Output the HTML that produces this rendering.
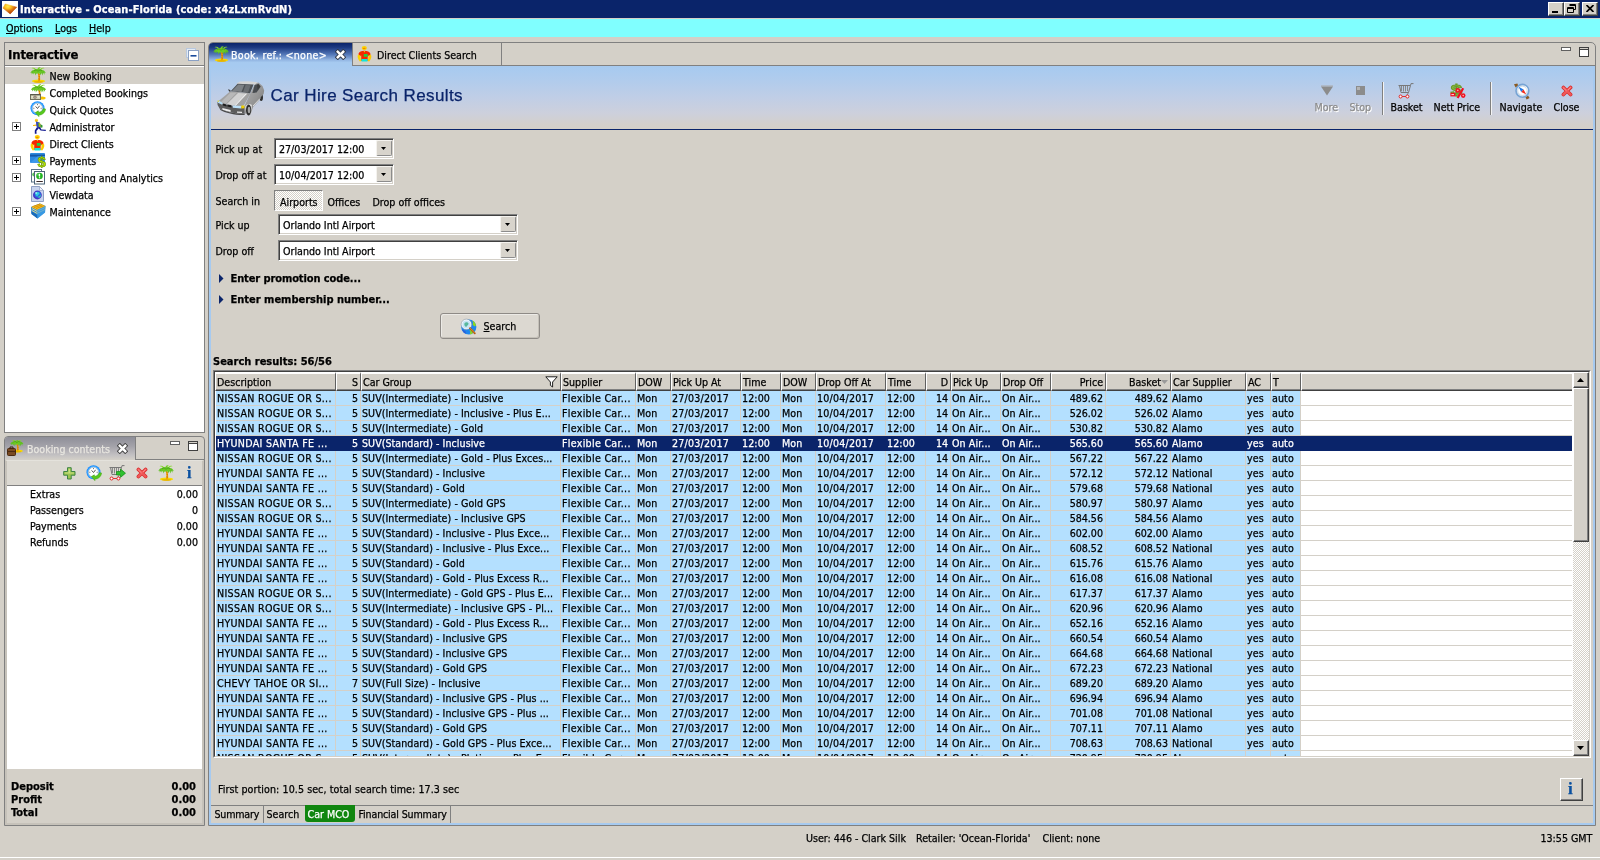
<!DOCTYPE html>
<html lang="en"><head><meta charset="utf-8"><title>Interactive - Ocean-Florida</title>
<style>
*{box-sizing:border-box;margin:0;padding:0}
html,body{width:1600px;height:860px;overflow:hidden;background:#d4d0c8}
body{position:relative;font:10.6px "DejaVu Sans Condensed","Liberation Sans",sans-serif;color:#000;-webkit-text-stroke:0.25px}
#app{position:absolute;left:0;top:0;width:1600px;height:860px;overflow:hidden;will-change:transform}
.a{position:absolute;white-space:pre;line-height:13px;height:13px}
.b{font:bold 11px "DejaVu Sans Condensed","Liberation Sans",sans-serif}
.abs{position:absolute}
.btn{position:absolute;background:#d4d0c8;border:1px solid;border-color:#fff #404040 #404040 #fff;box-shadow:inset -1px -1px 0 #808080}
.sunk{position:absolute;background:#fff;border:1px solid;border-color:#808080 #fff #fff #808080;box-shadow:inset 1px 1px 0 #404040, inset -1px -1px 0 #d4d0c8}
.r{text-align:right}
.hc{position:absolute;top:0;height:19px;background:#d4d0c8;border:1px solid;border-width:2px 1px 1px 1px;border-color:#fff #606060 #404040 #fff;box-shadow:inset 0 -1px 0 #808080}
.hc span{position:absolute;top:2px;line-height:13px;white-space:pre}
.row{position:absolute;left:1px;height:15px;width:1356px;border-bottom:1px solid #d4d0c8;background:#fff}
.row i{position:absolute;top:0;height:14px;font-style:normal;line-height:14px;white-space:pre;overflow:hidden;background:#b4e0ff;border-right:1px solid #d4d0c8;padding-left:1px;letter-spacing:0.1px}
.row i.k0{letter-spacing:.3px}.row i.k2{letter-spacing:.05px}.row i.k3{letter-spacing:.3px}.row i.k5{letter-spacing:.22px}
.row i.r{padding-left:0;padding-right:2px;text-align:right;letter-spacing:0}
.row.sel{background:#0a246a;border-bottom-color:#0a246a}
.row.sel i{background:#0a246a;color:#fff;border-right-color:#0a246a}
</style></head>
<body>
<div id="app">
<div class="abs" style="left:0px;top:0px;width:1600px;height:18px;background:#0a246a;"></div>
<svg class="abs" style="left:2px;top:1px" width="16" height="16" viewBox="0 0 16 16"><defs><radialGradient id="gem" cx="0.36" cy="0.25" r="0.75"><stop offset="0" stop-color="#ffe850"/><stop offset="0.3" stop-color="#fcc020"/><stop offset="0.6" stop-color="#d87010"/><stop offset="1" stop-color="#b03c00"/></radialGradient></defs><rect width="16" height="16" fill="#fff"/><path d="M1 7.1 L3.3 3 L14.7 6.2 L8.2 12.9Z" fill="url(#gem)" stroke="url(#gem)" stroke-width="0.6" stroke-linejoin="round"/></svg>
<div class="a b" style="left:20px;top:3px;color:#fff;letter-spacing:0.1px">Interactive - Ocean-Florida (code: x4zLxmRvdN)</div>
<div class="btn" style="left:1548px;top:2px;width:16px;height:14px"></div>
<div class="btn" style="left:1564px;top:2px;width:16px;height:14px"></div>
<div class="btn" style="left:1582px;top:2px;width:16px;height:14px"></div>
<div class="abs" style="left:1552px;top:11px;width:6px;height:2px;background:#000;"></div>
<svg class="abs" style="left:1567px;top:4px" width="10" height="10" viewBox="0 0 10 10"><path d="M2.5 0.5h6v5h-2M2.5 1.5h6M0.5 3.5h6v5h-6zM0.5 4.5h6" fill="none" stroke="#000" stroke-width="1"/></svg>
<svg class="abs" style="left:1586px;top:5px" width="8" height="7" viewBox="0 0 8 7"><path d="M0.5 0 L7.5 7 M7.5 0 L0.5 7" stroke="#000" stroke-width="1.7"/></svg>
<div class="abs" style="left:0px;top:18px;width:1600px;height:1px;background:#d4d0c8;"></div>
<div class="abs" style="left:0px;top:19px;width:1600px;height:18px;background:#80ffff;"></div>
<div class="a " style="left:6px;top:22px;"><u>O</u>ptions</div>
<div class="a " style="left:55px;top:22px;"><u>L</u>ogs</div>
<div class="a " style="left:89px;top:22px;"><u>H</u>elp</div>
<div class="abs" style="left:4px;top:42px;width:201px;height:391px;background:#d4d0c8;border:1px solid #808080"></div>
<div class="a " style="left:8px;top:49px;font:bold 13px 'DejaVu Sans Condensed','Liberation Sans',sans-serif;top:47px;line-height:16px;height:16px;letter-spacing:-0.15px">Interactive</div>
<svg class="abs" style="left:186px;top:48px" width="13" height="13" viewBox="0 0 13 13"><rect x="0.5" y="0.5" width="9" height="9" fill="#e4ecf6" stroke="#b8c8de"/><rect x="2.5" y="2.5" width="10" height="10" fill="#fff" stroke="#8aa0c4"/><rect x="4.5" y="7" width="6" height="1.6" fill="#1a4a9a"/></svg>
<div class="abs" style="left:5px;top:65px;width:199px;height:1px;background:#808080;"></div>
<div class="abs" style="left:5px;top:66px;width:199px;height:366px;background:#fff;"></div>
<div class="abs" style="left:5px;top:67px;width:199px;height:17px;background:#d4d0c8;"></div>
<svg class="abs" style="left:30px;top:67px" width="16" height="16" viewBox="0 0 16 16"><ellipse cx="8.5" cy="14.2" rx="6.6" ry="1.6" fill="#f8d800"/><ellipse cx="8.5" cy="14.9" rx="4.6" ry="0.8" fill="#e6b000"/><path d="M7.2 5 C8.6 8 8.6 11 8 14 L10 14 C10.4 11 10.2 8 9 5Z" fill="#f0a000"/><path d="M8.4 7 L9.6 7.6 M8.6 9.4 L9.9 10 M8.5 11.8 L9.9 12.2" stroke="#c05a00" stroke-width="0.8"/><path d="M8 5.5 C5.5 1.5 1.6 2.4 0.3 6.2 L1.6 5.6 L1.8 7.4 L3.2 5.6 L3.6 7.6 L5 5.6 L5.4 8.6 L6.6 6Z" fill="#5fc020"/><path d="M8 5.5 C10.5 1.5 14.4 2.4 15.9 6.2 L14.6 5.6 L14.4 7.8 L13 5.6 L12.6 8.4 L11.2 5.8 L10.8 8.6 L9.6 6Z" fill="#5fc020"/><path d="M8 5.5 C6.4 1.2 3.6 0 1.6 1.2 C4 1.4 5.4 2.8 6 4.6Z" fill="#86d82a"/><path d="M8 5.5 C9.6 1.2 12.4 0 14.6 1.2 C12 1.4 10.6 2.8 10 4.6Z" fill="#86d82a"/><path d="M8 5.6 C6 0.6 9.6 -0.2 10.6 0.6 C9 1.6 8.6 3.4 8 5.6Z" fill="#74cc24"/><ellipse cx="8" cy="4.3" rx="4.6" ry="2.3" fill="#6cc824"/><path d="M4 4 C5.4 2.6 7 2.6 8 4.4 C9 2.6 10.8 2.6 12 4" stroke="#3e9a14" stroke-width="0.7" fill="none"/></svg>
<div class="a " style="left:49.5px;top:69.5px;">New Booking</div>
<svg class="abs" style="left:30px;top:84px" width="16" height="16" viewBox="0 0 16 16"><g transform="translate(0.5,0)"><ellipse cx="11.5" cy="14" rx="3.6" ry="1.5" fill="#f5c400"/><path d="M7.2 5 C8.6 8 8.6 11 8 14 L10 14 C10.4 11 10.2 8 9 5Z" fill="#f0a000"/><path d="M8.4 7 L9.6 7.6 M8.6 9.4 L9.9 10 M8.5 11.8 L9.9 12.2" stroke="#c05a00" stroke-width="0.8"/><path d="M8 5.5 C5.5 1.5 1.6 2.4 0.3 6.2 L1.6 5.6 L1.8 7.4 L3.2 5.6 L3.6 7.6 L5 5.6 L5.4 8.6 L6.6 6Z" fill="#5fc020"/><path d="M8 5.5 C10.5 1.5 14.4 2.4 15.9 6.2 L14.6 5.6 L14.4 7.8 L13 5.6 L12.6 8.4 L11.2 5.8 L10.8 8.6 L9.6 6Z" fill="#5fc020"/><path d="M8 5.5 C6.4 1.2 3.6 0 1.6 1.2 C4 1.4 5.4 2.8 6 4.6Z" fill="#86d82a"/><path d="M8 5.5 C9.6 1.2 12.4 0 14.6 1.2 C12 1.4 10.6 2.8 10 4.6Z" fill="#86d82a"/><path d="M8 5.6 C6 0.6 9.6 -0.2 10.6 0.6 C9 1.6 8.6 3.4 8 5.6Z" fill="#74cc24"/><ellipse cx="8" cy="4.3" rx="4.6" ry="2.3" fill="#6cc824"/><path d="M4 4 C5.4 2.6 7 2.6 8 4.4 C9 2.6 10.8 2.6 12 4" stroke="#3e9a14" stroke-width="0.7" fill="none"/></g><rect x="0.5" y="10.5" width="10" height="5" fill="#d4d4b8" stroke="#70705a" stroke-width="1"/><rect x="0.5" y="10.3" width="10" height="1" fill="#505040"/><circle cx="5" cy="13.2" r="1.6" fill="#8a7a70"/><circle cx="5" cy="13.2" r="0.6" fill="#d4d4b8"/><rect x="7.6" y="12.4" width="2" height="0.9" fill="#f4f4e4"/><rect x="1.6" y="12.4" width="1.4" height="0.9" fill="#f4f4e4"/></svg>
<div class="a " style="left:49.5px;top:86.5px;">Completed Bookings</div>
<svg class="abs" style="left:30px;top:101px" width="16" height="16" viewBox="0 0 16 16"><circle cx="7.5" cy="7.3" r="7" fill="#1a8cff"/><circle cx="7.5" cy="7.3" r="6.2" fill="#4cb0ff"/><circle cx="7.5" cy="7.3" r="5" fill="#fff" stroke="#a8b8c8" stroke-width="0.7"/><path d="M7.5 3.2v0.9M7.5 10.5v0.9M3.4 7.3h0.9M10.7 7.3h0.9" stroke="#333" stroke-width="0.8"/><path d="M5.6 5.4 L7.5 7.5 L9.6 4.8" fill="none" stroke="#444" stroke-width="0.9"/><path d="M5.2 11.6 L8.4 9.8 L8.6 11.2 C10.8 11.2 12.6 10 13.4 7.6 L15.6 8 C15.2 12 11.8 14.2 8.8 14.2 L9 15.8Z" fill="#58c81c" stroke="#38a010" stroke-width="0.4"/></svg>
<div class="a " style="left:49.5px;top:103.5px;">Quick Quotes</div>
<svg class="abs" style="left:30px;top:118px" width="16" height="16" viewBox="0 0 16 16"><ellipse cx="6.4" cy="2.4" rx="1.5" ry="1.6" fill="#f8c000"/><path d="M5 1.2 L7.6 1.2 L8 2 L5.6 2.2Z" fill="#f8d860"/><path d="M6 3.6 L9.6 4.6 L11.4 9 L8 10 L6.2 8Z" fill="#3848b8"/><path d="M8 4.6 L10 5.2 L10.6 9 L8.8 9.4Z" fill="#58a828"/><path d="M10.2 6 L12.6 7.4 L12.4 9.4 L10.6 9.8Z" fill="#2e9a2e"/><path d="M9.4 5 L10.2 5.2 L10.4 9 L9.6 9Z" fill="#f4c020"/><path d="M6.2 6.6 L3 7 L3 8 L6.2 7.8Z" fill="#f8b800"/><path d="M7 9 L4.8 12.4 L4.8 15.8 L6.6 15.8 L6.4 13 L9 10Z" fill="#101890"/><path d="M8 9.4 L10.6 12.6 L15.8 13 L15.8 11.8 L11.4 11.4 L10 9Z" fill="#101890"/></svg>
<div class="a " style="left:49.5px;top:120.5px;">Administrator</div>
<svg class="abs" style="left:12px;top:122px" width="9" height="9" viewBox="0 0 9 9"><rect x="0.5" y="0.5" width="8" height="8" fill="#fff" stroke="#808080"/><path d="M2 4.5h5M4.5 2v5" stroke="#000" stroke-width="1"/></svg>
<svg class="abs" style="left:30px;top:135px" width="16" height="16" viewBox="0 0 16 16"><ellipse cx="7.3" cy="2.1" rx="2.6" ry="2.1" fill="#fcd000"/><ellipse cx="7.2" cy="2.4" rx="1.4" ry="0.7" fill="#f08800"/><path d="M1.4 8 C2 5.6 4.6 4.8 7.4 4.8 C10.2 4.8 12.8 5.6 13.6 8 L12.4 10.4 L10.8 9.6 L10.6 15 L4.2 15 L4.2 9.6 L2.6 10.4Z" fill="#f42800"/><path d="M6.6 4.9 L7.4 6.4 L8.2 4.9Z" fill="#fcd000"/><path d="M1.2 8.6 C0 10 0.6 13 2.8 15.4 L4.4 15 C3.6 13 3.4 11 3.6 9.8Z" fill="#fcd400"/><path d="M13.6 8.6 C15 10 14.4 13 12.2 15.4 L10.6 15 C11.4 13 11.6 11 11.4 9.8Z" fill="#fcc800"/><rect x="6.8" y="8" width="3.8" height="2.8" fill="#20d040"/><rect x="4.5" y="13" width="6" height="2.5" fill="#10e8d8"/></svg>
<div class="a " style="left:49.5px;top:137.5px;">Direct Clients</div>
<svg class="abs" style="left:30px;top:152px" width="17" height="16" viewBox="0 0 17 16"><rect x="0" y="1" width="15" height="10" rx="1" fill="#2c8ae0"/><rect x="0" y="2.6" width="15" height="2" fill="#1458a8"/><path d="M0 11 L8 4 L15 4 L15 11Z" fill="#4aa4f0" opacity="0.6"/><text x="11.6" y="14.8" text-anchor="middle" font-family="Liberation Sans" font-weight="bold" font-size="15" fill="#b4e000" stroke="#5a8800" stroke-width="0.5">$</text></svg>
<div class="a " style="left:49.5px;top:154.5px;">Payments</div>
<svg class="abs" style="left:12px;top:156px" width="9" height="9" viewBox="0 0 9 9"><rect x="0.5" y="0.5" width="8" height="8" fill="#fff" stroke="#808080"/><path d="M2 4.5h5M4.5 2v5" stroke="#000" stroke-width="1"/></svg>
<svg class="abs" style="left:30px;top:169px" width="16" height="16" viewBox="0 0 16 16"><rect x="1.5" y="0.5" width="10" height="12.5" fill="#fff" stroke="#5c7488"/><circle cx="4.2" cy="5.4" r="2" fill="#58c058"/><rect x="4.5" y="2.5" width="10" height="12.5" fill="#fff" stroke="#4c6478"/><circle cx="9.5" cy="7" r="3.3" fill="#22b422"/><circle cx="8.6" cy="5.8" r="1.3" fill="#7ee07e" opacity="0.7"/><path d="M9.5 4.8V7.6" stroke="#fff" stroke-width="1.3"/><rect x="8.85" y="8.2" width="1.3" height="1.1" fill="#fff"/><rect x="6.4" y="12" width="6.4" height="1" fill="#3a2a2a"/></svg>
<div class="a " style="left:49.5px;top:171.5px;">Reporting and Analytics</div>
<svg class="abs" style="left:12px;top:173px" width="9" height="9" viewBox="0 0 9 9"><rect x="0.5" y="0.5" width="8" height="8" fill="#fff" stroke="#808080"/><path d="M2 4.5h5M4.5 2v5" stroke="#000" stroke-width="1"/></svg>
<svg class="abs" style="left:30px;top:186px" width="16" height="17" viewBox="0 0 16 17"><path d="M1.5 0.5 H9.5 L13.5 4.5 V15.5 H1.5Z" fill="#c8d4ee" stroke="#90a0c4"/><path d="M9.5 0.5 V4.5 H13.5Z" fill="#f2f5fb" stroke="#90a0c4" stroke-width="0.7"/><circle cx="7.4" cy="9" r="4.4" fill="#4434c4"/><circle cx="7.8" cy="8.6" r="3.2" fill="#2c6ce0"/><path d="M5.4 6.6 C7 5.4 9.4 6 9.6 7.6 C9.2 9 7.6 8.8 7.4 10.4 C6 10.2 4.8 8.2 5.4 6.6Z" fill="#30d0e0"/><path d="M8.4 10.6 C9.6 10.4 10.6 9.6 10.8 8.6 C11.2 10.2 10.2 11.8 8.6 12.2Z" fill="#38d8b0"/><circle cx="6.2" cy="7" r="0.9" fill="#b8f0f8" opacity="0.8"/></svg>
<div class="a " style="left:49.5px;top:188.5px;">Viewdata</div>
<svg class="abs" style="left:30px;top:203px" width="16" height="16" viewBox="0 0 16 16"><path d="M1 4 L10 0.5 L15.5 3 L15 9.5 L7.5 15.5 L1.5 11Z" fill="#2a8ad8"/><path d="M1 4 L10 0.5 L15.5 3 L7 7Z" fill="#f8c020"/><path d="M2 5.6 L7 8.4 L15.4 4.4 M2 7.6 L7 10.4 L15.2 6.4" stroke="#f8e080" stroke-width="0.9" fill="none"/><path d="M1.2 8 L7.2 12 L7.5 15.5 L1.5 11Z" fill="#1a6ab8"/><path d="M7 7 L15.5 3 L15 9.5 L7.5 15.5Z" fill="#3ea0e8" opacity="0.7"/><path d="M2.4 3.6 L10 1 M4 4.6 L12 1.8 M6 5.6 L13.8 2.6" stroke="#c88000" stroke-width="0.7"/></svg>
<div class="a " style="left:49.5px;top:205.5px;">Maintenance</div>
<svg class="abs" style="left:12px;top:207px" width="9" height="9" viewBox="0 0 9 9"><rect x="0.5" y="0.5" width="8" height="8" fill="#fff" stroke="#808080"/><path d="M2 4.5h5M4.5 2v5" stroke="#000" stroke-width="1"/></svg>
<div class="abs" style="left:4px;top:436px;width:201px;height:390px;background:#d4d0c8;border:1px solid #808080;border-radius:4px 4px 0 0"></div>
<div class="abs" style="left:5px;top:437px;width:131px;height:23px;background:linear-gradient(#8e8e98,#a3a2a9 40%,#c2c0c2 78%,#d4d0c8);border-radius:3px 0 0 0"></div>
<div class="abs" style="left:135px;top:437px;width:1px;height:23px;background:#808080;"></div>
<div class="abs" style="left:136px;top:459px;width:68px;height:1px;background:#808080;"></div>
<svg class="abs" style="left:7px;top:440px" width="17" height="17" viewBox="0 0 17 17"><g transform="translate(3,-1) scale(0.85)"><ellipse cx="8.5" cy="14.2" rx="6.6" ry="1.6" fill="#f8d800"/><ellipse cx="8.5" cy="14.9" rx="4.6" ry="0.8" fill="#e6b000"/><path d="M7.2 5 C8.6 8 8.6 11 8 14 L10 14 C10.4 11 10.2 8 9 5Z" fill="#f0a000"/><path d="M8.4 7 L9.6 7.6 M8.6 9.4 L9.9 10 M8.5 11.8 L9.9 12.2" stroke="#c05a00" stroke-width="0.8"/><path d="M8 5.5 C5.5 1.5 1.6 2.4 0.3 6.2 L1.6 5.6 L1.8 7.4 L3.2 5.6 L3.6 7.6 L5 5.6 L5.4 8.6 L6.6 6Z" fill="#5fc020"/><path d="M8 5.5 C10.5 1.5 14.4 2.4 15.9 6.2 L14.6 5.6 L14.4 7.8 L13 5.6 L12.6 8.4 L11.2 5.8 L10.8 8.6 L9.6 6Z" fill="#5fc020"/><path d="M8 5.5 C6.4 1.2 3.6 0 1.6 1.2 C4 1.4 5.4 2.8 6 4.6Z" fill="#86d82a"/><path d="M8 5.5 C9.6 1.2 12.4 0 14.6 1.2 C12 1.4 10.6 2.8 10 4.6Z" fill="#86d82a"/><path d="M8 5.6 C6 0.6 9.6 -0.2 10.6 0.6 C9 1.6 8.6 3.4 8 5.6Z" fill="#74cc24"/><ellipse cx="8" cy="4.3" rx="4.6" ry="2.3" fill="#6cc824"/><path d="M4 4 C5.4 2.6 7 2.6 8 4.4 C9 2.6 10.8 2.6 12 4" stroke="#3e9a14" stroke-width="0.7" fill="none"/></g><rect x="0.5" y="8.5" width="8" height="7" rx="1" fill="#7a4a22" stroke="#4a2a10"/><path d="M3 8.5 V7 H6 V8.5" fill="none" stroke="#3a2010" stroke-width="1"/><rect x="0.5" y="11" width="8" height="1" fill="#4a2a10"/></svg>
<div class="a " style="left:27px;top:443px;color:#e8e6e0">Booking contents</div>
<svg class="abs" style="left:117px;top:443px" width="11" height="11" viewBox="0 0 11 11"><path d="M2.8 2.8 L8.2 8.2 M8.2 2.8 L2.8 8.2" stroke="#404040" stroke-width="4.3" stroke-linecap="square"/><path d="M2.8 2.8 L8.2 8.2 M8.2 2.8 L2.8 8.2" stroke="#fff" stroke-width="2.5" stroke-linecap="square"/></svg>
<svg class="abs" style="left:170px;top:441px" width="10" height="4" viewBox="0 0 10 4"><rect x="0.5" y="0.5" width="9" height="3" fill="#fff" stroke="#606060"/></svg>
<svg class="abs" style="left:188px;top:441px" width="10" height="10" viewBox="0 0 10 10"><rect x="0.5" y="0.5" width="9" height="9" fill="#fff" stroke="#404040"/><rect x="0.5" y="0.5" width="9" height="2" fill="#d4d0c8" stroke="#404040"/></svg>
<div class="abs" style="left:5px;top:460px;width:199px;height:365px;background:#d4d0c8;border:2px solid #c6c2ba;border-top:1px solid #e4e2dc"></div>
<div class="abs" style="left:7px;top:461px;width:195px;height:24px;background:#dcd9d2;"></div>
<div class="abs" style="left:7px;top:485px;width:195px;height:1px;background:#808080;"></div>
<div class="abs" style="left:7px;top:486px;width:195px;height:283px;background:#fff;"></div>
<svg class="abs" style="left:63px;top:467px" width="13" height="13" viewBox="0 0 13 13"><path d="M4.5 0.7 H8.2 V4.5 H12 V8.2 H8.2 V12 H4.5 V8.2 H0.7 V4.5 H4.5Z" fill="#9cc450" stroke="#3e8444" stroke-width="1" stroke-linejoin="round"/><path d="M5.6 1.8 H7.1 V5.6 H10.9 V6.4 H1.8 V5.6 H5.6Z" fill="#c8e080"/></svg>
<svg class="abs" style="left:86px;top:465px" width="16" height="16" viewBox="0 0 16 16"><circle cx="7.5" cy="7.3" r="7" fill="#1a8cff"/><circle cx="7.5" cy="7.3" r="6.2" fill="#4cb0ff"/><circle cx="7.5" cy="7.3" r="5" fill="#fff" stroke="#a8b8c8" stroke-width="0.7"/><path d="M7.5 3.2v0.9M7.5 10.5v0.9M3.4 7.3h0.9M10.7 7.3h0.9" stroke="#333" stroke-width="0.8"/><path d="M5.6 5.4 L7.5 7.5 L9.6 4.8" fill="none" stroke="#444" stroke-width="0.9"/><path d="M5.2 11.6 L8.4 9.8 L8.6 11.2 C10.8 11.2 12.6 10 13.4 7.6 L15.6 8 C15.2 12 11.8 14.2 8.8 14.2 L9 15.8Z" fill="#58c81c" stroke="#38a010" stroke-width="0.4"/></svg>
<svg class="abs" style="left:109px;top:465px" width="17" height="16" viewBox="0 0 17 16"><path d="M0.5 2.5 H12.5 M1.5 2.5 L3 9.5 H10.5 L12.5 2.5" fill="none" stroke="#787878" stroke-width="1"/><path d="M3.5 3v5M5.5 3v5.5M7.5 3v5.5M9.5 3v5" stroke="#888" stroke-width="1"/><path d="M12.5 2.5 L13 0.6 H15.5" fill="none" stroke="#787878" stroke-width="1"/><path d="M10.5 9.5 L9 12" fill="none" stroke="#787878" stroke-width="0.9"/><path d="M3 13.5 H9" stroke="#e02020" stroke-width="0.9"/><circle cx="2.6" cy="13.5" r="1.5" fill="#fff" stroke="#e02020" stroke-width="1"/><circle cx="9.4" cy="13.5" r="1.5" fill="#fff" stroke="#e02020" stroke-width="1"/><path d="M7.5 6.5 H11.5 V4 L16.5 8.2 L11.5 12.4 V10 H7.5Z" fill="#2fc02f" stroke="#148a14" stroke-width="0.7"/></svg>
<svg class="abs" style="left:136px;top:467px" width="12" height="12" viewBox="0 0 14 14"><path d="M2.8 2.8 L11.2 11.2 M11.2 2.8 L2.8 11.2" stroke="#d42828" stroke-width="4.2" stroke-linecap="round"/><path d="M2.8 2.8 L11.2 11.2 M11.2 2.8 L2.8 11.2" stroke="#f05858" stroke-width="2.8" stroke-linecap="round"/><path d="M2.6 3.2 L6.2 6.6 M11 3 L8.4 5.6" stroke="#ffa0a0" stroke-width="0.9" stroke-linecap="round"/></svg>
<svg class="abs" style="left:158px;top:465px" width="16" height="16" viewBox="0 0 16 16"><ellipse cx="8.5" cy="14.2" rx="6.6" ry="1.6" fill="#f8d800"/><ellipse cx="8.5" cy="14.9" rx="4.6" ry="0.8" fill="#e6b000"/><path d="M7.2 5 C8.6 8 8.6 11 8 14 L10 14 C10.4 11 10.2 8 9 5Z" fill="#f0a000"/><path d="M8.4 7 L9.6 7.6 M8.6 9.4 L9.9 10 M8.5 11.8 L9.9 12.2" stroke="#c05a00" stroke-width="0.8"/><path d="M8 5.5 C5.5 1.5 1.6 2.4 0.3 6.2 L1.6 5.6 L1.8 7.4 L3.2 5.6 L3.6 7.6 L5 5.6 L5.4 8.6 L6.6 6Z" fill="#5fc020"/><path d="M8 5.5 C10.5 1.5 14.4 2.4 15.9 6.2 L14.6 5.6 L14.4 7.8 L13 5.6 L12.6 8.4 L11.2 5.8 L10.8 8.6 L9.6 6Z" fill="#5fc020"/><path d="M8 5.5 C6.4 1.2 3.6 0 1.6 1.2 C4 1.4 5.4 2.8 6 4.6Z" fill="#86d82a"/><path d="M8 5.5 C9.6 1.2 12.4 0 14.6 1.2 C12 1.4 10.6 2.8 10 4.6Z" fill="#86d82a"/><path d="M8 5.6 C6 0.6 9.6 -0.2 10.6 0.6 C9 1.6 8.6 3.4 8 5.6Z" fill="#74cc24"/><ellipse cx="8" cy="4.3" rx="4.6" ry="2.3" fill="#6cc824"/><path d="M4 4 C5.4 2.6 7 2.6 8 4.4 C9 2.6 10.8 2.6 12 4" stroke="#3e9a14" stroke-width="0.7" fill="none"/></svg>
<div class="abs" style="left:187px;top:465px;font:bold 16px 'Liberation Serif',serif;color:#0a50a0;line-height:16px">i</div>
<div class="a " style="left:30px;top:488px;">Extras</div>
<div class="a r" style="left:140px;width:58px;top:488px">0.00</div>
<div class="a " style="left:30px;top:504px;">Passengers</div>
<div class="a r" style="left:140px;width:58px;top:504px">0</div>
<div class="a " style="left:30px;top:520px;">Payments</div>
<div class="a r" style="left:140px;width:58px;top:520px">0.00</div>
<div class="a " style="left:30px;top:536px;">Refunds</div>
<div class="a r" style="left:140px;width:58px;top:536px">0.00</div>
<div class="a b" style="left:11px;top:780px;">Deposit</div>
<div class="a b r" style="left:140px;width:56px;top:780px">0.00</div>
<div class="a b" style="left:11px;top:793px;">Profit</div>
<div class="a b r" style="left:140px;width:56px;top:793px">0.00</div>
<div class="a b" style="left:11px;top:806px;">Total</div>
<div class="a b r" style="left:140px;width:56px;top:806px">0.00</div>
<div class="abs" style="left:208px;top:42px;width:1388px;height:784px;background:#d4d0c8;border:1px solid #808080;border-radius:5px 5px 0 0"></div>
<div class="abs" style="left:352px;top:65px;width:1243px;height:1px;background:#808080;"></div>
<div class="abs" style="left:209px;top:66px;width:1386px;height:759px;background:#a6caf0;"></div>
<div class="abs" style="left:211px;top:66px;width:1382px;height:757px;background:#d4d0c8;"></div>
<div class="abs" style="left:211px;top:66px;width:1382px;height:63px;background:linear-gradient(#a6caf0,#b2ccec 25%,#c0cee6 50%,#cdd0dc 75%,#d3d0cc 92%,#d4d0c8);"></div>
<div class="abs" style="left:211px;top:129px;width:1382px;height:1px;background:#0a246a;"></div>
<div class="abs" style="left:209px;top:43px;width:143px;height:23px;background:linear-gradient(#0a246a,#1c3a82 20%,#5478b8 50%,#8fb2e0 72%,#a6caf0 85%);border-radius:4px 0 0 0"></div>
<svg class="abs" style="left:213px;top:46px" width="16" height="16" viewBox="0 0 16 16"><ellipse cx="8.5" cy="14.2" rx="6.6" ry="1.6" fill="#f8d800"/><ellipse cx="8.5" cy="14.9" rx="4.6" ry="0.8" fill="#e6b000"/><path d="M7.2 5 C8.6 8 8.6 11 8 14 L10 14 C10.4 11 10.2 8 9 5Z" fill="#f0a000"/><path d="M8.4 7 L9.6 7.6 M8.6 9.4 L9.9 10 M8.5 11.8 L9.9 12.2" stroke="#c05a00" stroke-width="0.8"/><path d="M8 5.5 C5.5 1.5 1.6 2.4 0.3 6.2 L1.6 5.6 L1.8 7.4 L3.2 5.6 L3.6 7.6 L5 5.6 L5.4 8.6 L6.6 6Z" fill="#5fc020"/><path d="M8 5.5 C10.5 1.5 14.4 2.4 15.9 6.2 L14.6 5.6 L14.4 7.8 L13 5.6 L12.6 8.4 L11.2 5.8 L10.8 8.6 L9.6 6Z" fill="#5fc020"/><path d="M8 5.5 C6.4 1.2 3.6 0 1.6 1.2 C4 1.4 5.4 2.8 6 4.6Z" fill="#86d82a"/><path d="M8 5.5 C9.6 1.2 12.4 0 14.6 1.2 C12 1.4 10.6 2.8 10 4.6Z" fill="#86d82a"/><path d="M8 5.6 C6 0.6 9.6 -0.2 10.6 0.6 C9 1.6 8.6 3.4 8 5.6Z" fill="#74cc24"/><ellipse cx="8" cy="4.3" rx="4.6" ry="2.3" fill="#6cc824"/><path d="M4 4 C5.4 2.6 7 2.6 8 4.4 C9 2.6 10.8 2.6 12 4" stroke="#3e9a14" stroke-width="0.7" fill="none"/></svg>
<div class="a " style="left:231px;top:49px;color:#fff;letter-spacing:0.28px">Book. ref.: &lt;none&gt;</div>
<svg class="abs" style="left:334.5px;top:48.5px" width="11" height="11" viewBox="0 0 11 11"><path d="M2.8 2.8 L8.2 8.2 M8.2 2.8 L2.8 8.2" stroke="#303848" stroke-width="4.3" stroke-linecap="square"/><path d="M2.8 2.8 L8.2 8.2 M8.2 2.8 L2.8 8.2" stroke="#fff" stroke-width="2.5" stroke-linecap="square"/></svg>
<div class="abs" style="left:352px;top:43px;width:1px;height:23px;background:#808080;"></div>
<svg class="abs" style="left:357px;top:46px" width="16" height="16" viewBox="0 0 16 16"><ellipse cx="7.3" cy="2.1" rx="2.6" ry="2.1" fill="#fcd000"/><ellipse cx="7.2" cy="2.4" rx="1.4" ry="0.7" fill="#f08800"/><path d="M1.4 8 C2 5.6 4.6 4.8 7.4 4.8 C10.2 4.8 12.8 5.6 13.6 8 L12.4 10.4 L10.8 9.6 L10.6 15 L4.2 15 L4.2 9.6 L2.6 10.4Z" fill="#f42800"/><path d="M6.6 4.9 L7.4 6.4 L8.2 4.9Z" fill="#fcd000"/><path d="M1.2 8.6 C0 10 0.6 13 2.8 15.4 L4.4 15 C3.6 13 3.4 11 3.6 9.8Z" fill="#fcd400"/><path d="M13.6 8.6 C15 10 14.4 13 12.2 15.4 L10.6 15 C11.4 13 11.6 11 11.4 9.8Z" fill="#fcc800"/><rect x="6.8" y="8" width="3.8" height="2.8" fill="#20d040"/><rect x="4.5" y="13" width="6" height="2.5" fill="#10e8d8"/></svg>
<div class="a " style="left:377px;top:49px;">Direct Clients Search</div>
<div class="abs" style="left:501px;top:43px;width:1px;height:22px;background:#808080;"></div>
<svg class="abs" style="left:1561px;top:47px" width="10" height="4" viewBox="0 0 10 4"><rect x="0.5" y="0.5" width="9" height="3" fill="#fff" stroke="#606060"/></svg>
<svg class="abs" style="left:1579px;top:47px" width="10" height="10" viewBox="0 0 10 10"><rect x="0.5" y="0.5" width="9" height="9" fill="#fff" stroke="#404040"/><rect x="0.5" y="0.5" width="9" height="2" fill="#d4d0c8" stroke="#404040"/></svg>
<svg class="abs" style="left:217px;top:80px" width="48" height="36" viewBox="0 0 48 36"><defs><linearGradient id="cg" x1="0" y1="0" x2="1" y2="1"><stop offset="0" stop-color="#b4b4b4"/><stop offset="0.55" stop-color="#949494"/><stop offset="1" stop-color="#6c6c6c"/></linearGradient></defs><ellipse cx="44.2" cy="17.5" rx="1.8" ry="3.4" fill="#303030"/><path d="M27 27 L33 14 L38 3.6 L41.5 2.4 L45.5 6 L47.2 10.5 L46.6 14 L44 17 L42.6 20 L36 27 L33.5 34.5 L28 33.5Z" fill="url(#cg)"/><path d="M19.5 3.4 L23 1.6 L31 1.2 L40.5 2.2 L38.2 4.4 L34 5 L21 4.6Z" fill="#d4d4d4"/><path d="M13.4 11.6 L20.6 3.8 L36.6 4.6 L33 13.4 C26 12.4 19 12 13.4 11.6Z" fill="#4e5256"/><path d="M15 11 L21.2 4.6 L27.4 4.8 L24.4 12Z" fill="#8e9296" opacity="0.75"/><path d="M28.6 5 L33.6 5.2 L31 12.8 L26 12.2Z" fill="#787c80" opacity="0.7"/><path d="M37.6 5 L41.6 3.8 L43.8 6.6 L39.6 12.6 L35.4 13Z" fill="#484c50"/><path d="M40 5 L41.4 4.6 L43 6.6 L40.6 10Z" fill="#3c3c3c"/><path d="M11 9.2 L13.4 10 L13.6 12 L12.2 11.6Z" fill="#3a3a3a"/><path d="M1 21.6 L6.5 17 L13 11.6 C20 12 27 12.4 33.4 13.6 L27.4 24.6 L25 26.6 C17 26.6 8 25 1 21.6Z" fill="#a2a2a2"/><path d="M13.6 12.4 L19.6 12.8 L9 23.8 L4 22Z" fill="#b8b8b8"/><path d="M21 13 L29 13.6 L17.6 25.6 L9.6 24.2Z" fill="#d2d2d2"/><path d="M29 13.6 L30 13.7 L18.6 25.8 L17.6 25.6Z" fill="#fafafa"/><path d="M0.4 21.8 C8 25.4 17 27 27.2 26.8 L27.8 33.6 C19 34.2 9 32 2.6 28.6 L0.6 25Z" fill="#5c5c5c"/><path d="M0.6 20.6 L1.6 20.4 L5.4 22.8 L5.2 24.8 L0.8 22.8Z" fill="#b4dcf4"/><path d="M0.6 20.4 L1.8 20.6 L1.8 22 L0.6 21.8Z" fill="#e8d020"/><path d="M15.6 25.4 L24.4 26 L24.2 28.4 L15.8 27.8Z" fill="#bce0f8"/><path d="M24.4 25.6 L27.4 25.6 L27.4 28.2 L24.2 28.4Z" fill="#f0d000"/><path d="M6 23.4 L9.4 24.4 L9.4 26.4 L6 25.4Z M10.4 24.6 L14.4 25.2 L14.4 27.4 L10.4 26.6Z" fill="#1e1e1e"/><path d="M5.4 28 L13.6 30 L13.6 32 L5.4 30Z" fill="#ececec"/><path d="M20 31.6 L25 31.8 L25 33 L20 32.8Z" fill="#ececec"/><path d="M2.6 28.6 C9 32 19 34.2 27.8 33.6 L27.6 35 C19 35.4 8 33 3.4 30Z" fill="#4a4a4a"/><path d="M28 27 C29 24 33 23 35 25 L34 34 L30 35Z" fill="#d8d8d8"/><ellipse cx="31.6" cy="30" rx="2.6" ry="5.4" fill="#2c2c2c"/><ellipse cx="32" cy="30" rx="1.3" ry="3.2" fill="#a4a4a4"/><path d="M36 26 L43 18.6" stroke="#f0f0f0" stroke-width="0.8"/></svg>
<div class="a" style="left:270.5px;top:86px;height:22px;line-height:22px;font:17px 'Liberation Sans',sans-serif;letter-spacing:0.4px;color:#0a246a">Car Hire Search Results</div>
<svg class="abs" style="left:1320px;top:85px" width="14" height="11" viewBox="0 0 14 11"><path d="M1 1.5 H13 L7 10.5Z" fill="#8c8c8c"/><path d="M1 1 H13" stroke="#a8a8a8"/></svg>
<div class="a " style="left:1314.5px;top:101px;color:#fff;margin:1px 0 0 1px">More</div>
<div class="a " style="left:1314.5px;top:101px;color:#8c8c8c">More</div>
<svg class="abs" style="left:1356px;top:86px" width="9" height="9" viewBox="0 0 9 9"><rect width="9" height="9" fill="#8c8c8c"/><rect x="1" y="1" width="3" height="3" fill="#b4b4b4"/></svg>
<div class="a " style="left:1349.5px;top:101px;color:#fff;margin:1px 0 0 1px">Stop</div>
<div class="a " style="left:1349.5px;top:101px;color:#8c8c8c">Stop</div>
<div class="abs" style="left:1382px;top:82px;width:1px;height:33px;background:#808080;"></div>
<div class="abs" style="left:1383px;top:82px;width:1px;height:33px;background:#f4f4f4;"></div>
<svg class="abs" style="left:1398px;top:83px" width="17" height="16" viewBox="0 0 17 16"><path d="M0.5 2.5 H12.5 M1.5 2.5 L3 9.5 H10.5 L12.5 2.5" fill="none" stroke="#787878" stroke-width="1"/><path d="M3.5 3v5M5.5 3v5.5M7.5 3v5.5M9.5 3v5" stroke="#888" stroke-width="1"/><path d="M12.5 2.5 L13 0.6 H15.5" fill="none" stroke="#787878" stroke-width="1"/><path d="M10.5 9.5 L9 12" fill="none" stroke="#787878" stroke-width="0.9"/><path d="M3 13.5 H9" stroke="#e02020" stroke-width="0.9"/><circle cx="2.6" cy="13.5" r="1.5" fill="#fff" stroke="#e02020" stroke-width="1"/><circle cx="9.4" cy="13.5" r="1.5" fill="#fff" stroke="#e02020" stroke-width="1"/></svg>
<div class="a " style="left:1390.5px;top:101px;">Basket</div>
<svg class="abs" style="left:1449px;top:83px" width="17" height="17" viewBox="0 0 17 17"><g transform="translate(7.4 0) scale(1.35 1)"><text x="0" y="12" text-anchor="middle" font-family="Liberation Sans" font-weight="bold" font-size="15" fill="#8cba40" stroke="#6a9a28" stroke-width="0.9">$</text></g><rect x="1.4" y="9.8" width="5" height="3.6" fill="#f01020"/><rect x="2.4" y="11.1" width="2.6" height="1" fill="#fff" opacity="0.85"/><circle cx="8.8" cy="7.4" r="2.3" fill="#f01020"/><circle cx="8.8" cy="7.4" r="0.8" fill="#ffb0a0"/><circle cx="14.2" cy="12.6" r="2.3" fill="#f01020"/><circle cx="14.2" cy="12.6" r="0.8" fill="#ffb0a0"/><path d="M14.2 5.2 L8.6 15" stroke="#f01020" stroke-width="2.2"/></svg>
<div class="a " style="left:1433.5px;top:101px;">Nett Price</div>
<div class="abs" style="left:1490px;top:82px;width:1px;height:33px;background:#808080;"></div>
<div class="abs" style="left:1491px;top:82px;width:1px;height:33px;background:#f4f4f4;"></div>
<svg class="abs" style="left:1513px;top:83px" width="17" height="17" viewBox="0 0 17 17"><path d="M1 1.2 L4.4 0.6 L5.2 2.8 L2.6 4.4Z" fill="#8a5a22"/><path d="M16.6 15 L13.6 16.4 L12.4 14 L15 12.6Z" fill="#8a5a22"/><circle cx="9.4" cy="7.8" r="6.4" fill="#dce8f4" stroke="#78a4d4" stroke-width="1.6"/><circle cx="9.4" cy="7.8" r="4.6" fill="#fff" stroke="#b8c8d8" stroke-width="0.6"/><path d="M5.6 3.8 L10.6 6.6 L8.2 9Z" fill="#1e78e8"/><path d="M13.2 11.4 L8.2 9 L10.6 6.6Z" fill="#f03020"/><path d="M12.6 3.6 C13.6 4.6 14.2 6 14.2 7.4" stroke="#fff" stroke-width="1" fill="none" opacity="0.8"/></svg>
<div class="a " style="left:1499.5px;top:101px;">Navigate</div>
<svg class="abs" style="left:1561px;top:85px" width="12" height="12" viewBox="0 0 14 14"><path d="M2.8 2.8 L11.2 11.2 M11.2 2.8 L2.8 11.2" stroke="#d42828" stroke-width="4.2" stroke-linecap="round"/><path d="M2.8 2.8 L11.2 11.2 M11.2 2.8 L2.8 11.2" stroke="#f05858" stroke-width="2.8" stroke-linecap="round"/><path d="M2.6 3.2 L6.2 6.6 M11 3 L8.4 5.6" stroke="#ffa0a0" stroke-width="0.9" stroke-linecap="round"/></svg>
<div class="a " style="left:1553.5px;top:101px;">Close</div>
<div class="a " style="left:215.5px;top:143px;">Pick up at</div>
<div class="sunk" style="left:274px;top:138px;width:120px;height:21px"></div>
<div class="a " style="left:279px;top:143px;">27/03/2017 12:00</div>
<div class="abs" style="left:376px;top:140px;width:16px;height:16px;background:#d8d4cc;border:1px solid;border-color:#f4f2ee #8c8c8c #8c8c8c #f4f2ee;border-radius:2px"></div>
<svg class="abs" style="left:381px;top:147px" width="5" height="3" viewBox="0 0 5 3"><path d="M0 0 H5 L2.5 3Z" fill="#000"/></svg>
<div class="a " style="left:215.5px;top:169px;">Drop off at</div>
<div class="sunk" style="left:274px;top:164px;width:120px;height:21px"></div>
<div class="a " style="left:279px;top:169px;">10/04/2017 12:00</div>
<div class="abs" style="left:376px;top:166px;width:16px;height:16px;background:#d8d4cc;border:1px solid;border-color:#f4f2ee #8c8c8c #8c8c8c #f4f2ee;border-radius:2px"></div>
<svg class="abs" style="left:381px;top:173px" width="5" height="3" viewBox="0 0 5 3"><path d="M0 0 H5 L2.5 3Z" fill="#000"/></svg>
<div class="a " style="left:215.5px;top:195px;">Search in</div>
<div class="abs" style="left:274px;top:190px;width:49px;height:21px;background:repeating-conic-gradient(#fff 0 25%, #d4d0c8 0 50%) 0 0/2px 2px;border:1px solid;border-color:#808080 #fff #fff #808080"></div>
<div class="a " style="left:280px;top:196px;">Airports</div>
<div class="a " style="left:327.5px;top:196px;">Offices</div>
<div class="a " style="left:372.5px;top:196px;">Drop off offices</div>
<div class="a " style="left:215.5px;top:219px;">Pick up</div>
<div class="sunk" style="left:278px;top:214px;width:240px;height:21px"></div>
<div class="a " style="left:283px;top:219px;">Orlando Intl Airport</div>
<div class="abs" style="left:500px;top:216px;width:16px;height:16px;background:#d8d4cc;border:1px solid;border-color:#f4f2ee #8c8c8c #8c8c8c #f4f2ee;border-radius:2px"></div>
<svg class="abs" style="left:505px;top:223px" width="5" height="3" viewBox="0 0 5 3"><path d="M0 0 H5 L2.5 3Z" fill="#000"/></svg>
<div class="a " style="left:215.5px;top:245px;">Drop off</div>
<div class="sunk" style="left:278px;top:240px;width:240px;height:21px"></div>
<div class="a " style="left:283px;top:245px;">Orlando Intl Airport</div>
<div class="abs" style="left:500px;top:242px;width:16px;height:16px;background:#d8d4cc;border:1px solid;border-color:#f4f2ee #8c8c8c #8c8c8c #f4f2ee;border-radius:2px"></div>
<svg class="abs" style="left:505px;top:249px" width="5" height="3" viewBox="0 0 5 3"><path d="M0 0 H5 L2.5 3Z" fill="#000"/></svg>
<svg class="abs" style="left:219px;top:274px" width="5" height="9" viewBox="0 0 5 9"><path d="M0 0 L4.5 4.5 L0 9Z" fill="#0a246a"/></svg>
<div class="a b" style="left:230.5px;top:272px;letter-spacing:-0.1px">Enter promotion code...</div>
<svg class="abs" style="left:219px;top:295px" width="5" height="9" viewBox="0 0 5 9"><path d="M0 0 L4.5 4.5 L0 9Z" fill="#0a246a"/></svg>
<div class="a b" style="left:230.5px;top:293px;">Enter membership number...</div>
<div class="abs" style="left:440px;top:313px;width:100px;height:26px;background:#dcd8d1;border:1px solid #8e8a86;box-shadow:inset 1px 1px 0 #eceae6, inset -1px -1px 0 #c4c0b8;border-radius:3px"></div>
<svg class="abs" style="left:460px;top:318px" width="17" height="17" viewBox="0 0 17 17"><circle cx="8.8" cy="9" r="7.6" fill="#1e86ee"/><path d="M12 2.6 C14 3.4 15.6 5 16 7.4 L14.4 8.4 L12.6 6.6 L13.2 4.4Z" fill="#8cd820"/><path d="M9.4 12 L12 11 L13.6 12.6 L12.4 15.4 C11.4 16 10.6 16.2 9.8 16.2 L10.4 13.8Z" fill="#8cd820"/><path d="M2 11.4 C2.6 13.4 4 15 6 15.8 L5.6 13.6 L3.6 12Z" fill="#2a60d8"/><circle cx="6.4" cy="6.4" r="4.6" fill="#c8e4f4" stroke="#f4f8fc" stroke-width="1.2"/><path d="M4.6 5 C5.6 3.8 7.6 3.8 8.6 5.4 C8.4 7.4 6.6 7.2 6.4 9 C4.8 8.6 3.8 6.6 4.6 5Z" fill="#58b89c"/><circle cx="6.4" cy="6.4" r="5.3" fill="none" stroke="#8090a0" stroke-width="0.5"/><path d="M10 10.2 L14.8 15.4" stroke="#a85418" stroke-width="1.8" stroke-linecap="round"/><path d="M10 10 L14.6 15" stroke="#f09030" stroke-width="0.8" stroke-linecap="round"/></svg>
<div class="a " style="left:483.5px;top:320px;"><u>S</u>earch</div>
<div class="a b" style="left:213px;top:355px;">Search results: 56/56</div>
<div class="abs" style="left:213px;top:370px;width:1378px;height:388px;background:#fff;border:1px solid;border-color:#808080 #fff #fff #808080"></div>
<div class="abs" style="left:214px;top:371px;width:1376px;height:386px;background:#fff;border:1px solid;border-color:#404040 #d4d0c8 #d4d0c8 #404040"></div>
<div class="abs" style="left:215px;top:372px;width:1358px;height:384px;overflow:hidden;background:#fff">
<div class="hc" style="left:1086px;width:271px;border-right:0"></div>
<div class="hc" style="left:0px;width:121px"><span style="left:1px">Description</span></div>
<div class="hc" style="left:121px;width:25px"><span style="right:2px">S</span></div>
<div class="hc" style="left:146px;width:200px"><span style="left:1px">Car Group</span></div>
<div class="hc" style="left:346px;width:75px"><span style="left:1px">Supplier</span></div>
<div class="hc" style="left:421px;width:35px"><span style="left:1px">DOW</span></div>
<div class="hc" style="left:456px;width:70px"><span style="left:1px">Pick Up At</span></div>
<div class="hc" style="left:526px;width:40px"><span style="left:1px">Time</span></div>
<div class="hc" style="left:566px;width:35px"><span style="left:1px">DOW</span></div>
<div class="hc" style="left:601px;width:70px"><span style="left:1px">Drop Off At</span></div>
<div class="hc" style="left:671px;width:40px"><span style="left:1px">Time</span></div>
<div class="hc" style="left:711px;width:25px"><span style="right:2px">D</span></div>
<div class="hc" style="left:736px;width:50px"><span style="left:1px">Pick Up</span></div>
<div class="hc" style="left:786px;width:50px"><span style="left:1px">Drop Off</span></div>
<div class="hc" style="left:836px;width:55px"><span style="right:2px">Price</span></div>
<div class="hc" style="left:891px;width:65px"><span style="right:9px">Basket</span></div>
<div class="hc" style="left:956px;width:75px"><span style="left:1px">Car Supplier</span></div>
<div class="hc" style="left:1031px;width:25px"><span style="left:1px">AC</span></div>
<div class="hc" style="left:1056px;width:30px"><span style="left:1px">T</span></div>
<svg class="abs" style="left:330px;top:4px" width="13" height="12" viewBox="0 0 13 12"><path d="M0.8 0.8 H12.2 L7.6 6 V11 L5.4 9.4 V6Z" fill="#fff" stroke="#202020" stroke-width="1"/></svg>
<svg class="abs" style="left:946px;top:8px" width="7" height="4" viewBox="0 0 7 4"><path d="M0 0 H7 L3.5 4Z" fill="#9a9a9a"/></svg>
<div class="row" style="top:19px"><i class=k0 style="left:0px;width:120px">NISSAN ROGUE OR S...</i><i class=r style="left:120px;width:25px">5</i><i class=k2 style="left:145px;width:200px">SUV(Intermediate) - Inclusive</i><i class=k3 style="left:345px;width:75px">Flexible Car...</i><i style="left:420px;width:35px">Mon</i><i class=k5 style="left:455px;width:70px">27/03/2017</i><i style="left:525px;width:40px">12:00</i><i style="left:565px;width:35px">Mon</i><i class=k5 style="left:600px;width:70px">10/04/2017</i><i style="left:670px;width:40px">12:00</i><i class=r style="left:710px;width:25px">14</i><i style="left:735px;width:50px">On Air...</i><i style="left:785px;width:50px">On Air...</i><i class=r style="left:835px;width:55px">489.62</i><i class=r style="left:890px;width:65px">489.62</i><i style="left:955px;width:75px">Alamo</i><i style="left:1030px;width:25px">yes</i><i style="left:1055px;width:30px">auto</i></div>
<div class="row" style="top:34px"><i class=k0 style="left:0px;width:120px">NISSAN ROGUE OR S...</i><i class=r style="left:120px;width:25px">5</i><i class=k2 style="left:145px;width:200px">SUV(Intermediate) - Inclusive - Plus E...</i><i class=k3 style="left:345px;width:75px">Flexible Car...</i><i style="left:420px;width:35px">Mon</i><i class=k5 style="left:455px;width:70px">27/03/2017</i><i style="left:525px;width:40px">12:00</i><i style="left:565px;width:35px">Mon</i><i class=k5 style="left:600px;width:70px">10/04/2017</i><i style="left:670px;width:40px">12:00</i><i class=r style="left:710px;width:25px">14</i><i style="left:735px;width:50px">On Air...</i><i style="left:785px;width:50px">On Air...</i><i class=r style="left:835px;width:55px">526.02</i><i class=r style="left:890px;width:65px">526.02</i><i style="left:955px;width:75px">Alamo</i><i style="left:1030px;width:25px">yes</i><i style="left:1055px;width:30px">auto</i></div>
<div class="row" style="top:49px"><i class=k0 style="left:0px;width:120px">NISSAN ROGUE OR S...</i><i class=r style="left:120px;width:25px">5</i><i class=k2 style="left:145px;width:200px">SUV(Intermediate) - Gold</i><i class=k3 style="left:345px;width:75px">Flexible Car...</i><i style="left:420px;width:35px">Mon</i><i class=k5 style="left:455px;width:70px">27/03/2017</i><i style="left:525px;width:40px">12:00</i><i style="left:565px;width:35px">Mon</i><i class=k5 style="left:600px;width:70px">10/04/2017</i><i style="left:670px;width:40px">12:00</i><i class=r style="left:710px;width:25px">14</i><i style="left:735px;width:50px">On Air...</i><i style="left:785px;width:50px">On Air...</i><i class=r style="left:835px;width:55px">530.82</i><i class=r style="left:890px;width:65px">530.82</i><i style="left:955px;width:75px">Alamo</i><i style="left:1030px;width:25px">yes</i><i style="left:1055px;width:30px">auto</i></div>
<div class="row sel" style="top:64px"><i class=k0 style="left:0px;width:120px">HYUNDAI SANTA FE ...</i><i class=r style="left:120px;width:25px">5</i><i class=k2 style="left:145px;width:200px">SUV(Standard) - Inclusive</i><i class=k3 style="left:345px;width:75px">Flexible Car...</i><i style="left:420px;width:35px">Mon</i><i class=k5 style="left:455px;width:70px">27/03/2017</i><i style="left:525px;width:40px">12:00</i><i style="left:565px;width:35px">Mon</i><i class=k5 style="left:600px;width:70px">10/04/2017</i><i style="left:670px;width:40px">12:00</i><i class=r style="left:710px;width:25px">14</i><i style="left:735px;width:50px">On Air...</i><i style="left:785px;width:50px">On Air...</i><i class=r style="left:835px;width:55px">565.60</i><i class=r style="left:890px;width:65px">565.60</i><i style="left:955px;width:75px">Alamo</i><i style="left:1030px;width:25px">yes</i><i style="left:1055px;width:30px">auto</i></div>
<div class="row" style="top:79px"><i class=k0 style="left:0px;width:120px">NISSAN ROGUE OR S...</i><i class=r style="left:120px;width:25px">5</i><i class=k2 style="left:145px;width:200px">SUV(Intermediate) - Gold - Plus Exces...</i><i class=k3 style="left:345px;width:75px">Flexible Car...</i><i style="left:420px;width:35px">Mon</i><i class=k5 style="left:455px;width:70px">27/03/2017</i><i style="left:525px;width:40px">12:00</i><i style="left:565px;width:35px">Mon</i><i class=k5 style="left:600px;width:70px">10/04/2017</i><i style="left:670px;width:40px">12:00</i><i class=r style="left:710px;width:25px">14</i><i style="left:735px;width:50px">On Air...</i><i style="left:785px;width:50px">On Air...</i><i class=r style="left:835px;width:55px">567.22</i><i class=r style="left:890px;width:65px">567.22</i><i style="left:955px;width:75px">Alamo</i><i style="left:1030px;width:25px">yes</i><i style="left:1055px;width:30px">auto</i></div>
<div class="row" style="top:94px"><i class=k0 style="left:0px;width:120px">HYUNDAI SANTA FE ...</i><i class=r style="left:120px;width:25px">5</i><i class=k2 style="left:145px;width:200px">SUV(Standard) - Inclusive</i><i class=k3 style="left:345px;width:75px">Flexible Car...</i><i style="left:420px;width:35px">Mon</i><i class=k5 style="left:455px;width:70px">27/03/2017</i><i style="left:525px;width:40px">12:00</i><i style="left:565px;width:35px">Mon</i><i class=k5 style="left:600px;width:70px">10/04/2017</i><i style="left:670px;width:40px">12:00</i><i class=r style="left:710px;width:25px">14</i><i style="left:735px;width:50px">On Air...</i><i style="left:785px;width:50px">On Air...</i><i class=r style="left:835px;width:55px">572.12</i><i class=r style="left:890px;width:65px">572.12</i><i style="left:955px;width:75px">National</i><i style="left:1030px;width:25px">yes</i><i style="left:1055px;width:30px">auto</i></div>
<div class="row" style="top:109px"><i class=k0 style="left:0px;width:120px">HYUNDAI SANTA FE ...</i><i class=r style="left:120px;width:25px">5</i><i class=k2 style="left:145px;width:200px">SUV(Standard) - Gold</i><i class=k3 style="left:345px;width:75px">Flexible Car...</i><i style="left:420px;width:35px">Mon</i><i class=k5 style="left:455px;width:70px">27/03/2017</i><i style="left:525px;width:40px">12:00</i><i style="left:565px;width:35px">Mon</i><i class=k5 style="left:600px;width:70px">10/04/2017</i><i style="left:670px;width:40px">12:00</i><i class=r style="left:710px;width:25px">14</i><i style="left:735px;width:50px">On Air...</i><i style="left:785px;width:50px">On Air...</i><i class=r style="left:835px;width:55px">579.68</i><i class=r style="left:890px;width:65px">579.68</i><i style="left:955px;width:75px">National</i><i style="left:1030px;width:25px">yes</i><i style="left:1055px;width:30px">auto</i></div>
<div class="row" style="top:124px"><i class=k0 style="left:0px;width:120px">NISSAN ROGUE OR S...</i><i class=r style="left:120px;width:25px">5</i><i class=k2 style="left:145px;width:200px">SUV(Intermediate) - Gold GPS</i><i class=k3 style="left:345px;width:75px">Flexible Car...</i><i style="left:420px;width:35px">Mon</i><i class=k5 style="left:455px;width:70px">27/03/2017</i><i style="left:525px;width:40px">12:00</i><i style="left:565px;width:35px">Mon</i><i class=k5 style="left:600px;width:70px">10/04/2017</i><i style="left:670px;width:40px">12:00</i><i class=r style="left:710px;width:25px">14</i><i style="left:735px;width:50px">On Air...</i><i style="left:785px;width:50px">On Air...</i><i class=r style="left:835px;width:55px">580.97</i><i class=r style="left:890px;width:65px">580.97</i><i style="left:955px;width:75px">Alamo</i><i style="left:1030px;width:25px">yes</i><i style="left:1055px;width:30px">auto</i></div>
<div class="row" style="top:139px"><i class=k0 style="left:0px;width:120px">NISSAN ROGUE OR S...</i><i class=r style="left:120px;width:25px">5</i><i class=k2 style="left:145px;width:200px">SUV(Intermediate) - Inclusive GPS</i><i class=k3 style="left:345px;width:75px">Flexible Car...</i><i style="left:420px;width:35px">Mon</i><i class=k5 style="left:455px;width:70px">27/03/2017</i><i style="left:525px;width:40px">12:00</i><i style="left:565px;width:35px">Mon</i><i class=k5 style="left:600px;width:70px">10/04/2017</i><i style="left:670px;width:40px">12:00</i><i class=r style="left:710px;width:25px">14</i><i style="left:735px;width:50px">On Air...</i><i style="left:785px;width:50px">On Air...</i><i class=r style="left:835px;width:55px">584.56</i><i class=r style="left:890px;width:65px">584.56</i><i style="left:955px;width:75px">Alamo</i><i style="left:1030px;width:25px">yes</i><i style="left:1055px;width:30px">auto</i></div>
<div class="row" style="top:154px"><i class=k0 style="left:0px;width:120px">HYUNDAI SANTA FE ...</i><i class=r style="left:120px;width:25px">5</i><i class=k2 style="left:145px;width:200px">SUV(Standard) - Inclusive - Plus Exce...</i><i class=k3 style="left:345px;width:75px">Flexible Car...</i><i style="left:420px;width:35px">Mon</i><i class=k5 style="left:455px;width:70px">27/03/2017</i><i style="left:525px;width:40px">12:00</i><i style="left:565px;width:35px">Mon</i><i class=k5 style="left:600px;width:70px">10/04/2017</i><i style="left:670px;width:40px">12:00</i><i class=r style="left:710px;width:25px">14</i><i style="left:735px;width:50px">On Air...</i><i style="left:785px;width:50px">On Air...</i><i class=r style="left:835px;width:55px">602.00</i><i class=r style="left:890px;width:65px">602.00</i><i style="left:955px;width:75px">Alamo</i><i style="left:1030px;width:25px">yes</i><i style="left:1055px;width:30px">auto</i></div>
<div class="row" style="top:169px"><i class=k0 style="left:0px;width:120px">HYUNDAI SANTA FE ...</i><i class=r style="left:120px;width:25px">5</i><i class=k2 style="left:145px;width:200px">SUV(Standard) - Inclusive - Plus Exce...</i><i class=k3 style="left:345px;width:75px">Flexible Car...</i><i style="left:420px;width:35px">Mon</i><i class=k5 style="left:455px;width:70px">27/03/2017</i><i style="left:525px;width:40px">12:00</i><i style="left:565px;width:35px">Mon</i><i class=k5 style="left:600px;width:70px">10/04/2017</i><i style="left:670px;width:40px">12:00</i><i class=r style="left:710px;width:25px">14</i><i style="left:735px;width:50px">On Air...</i><i style="left:785px;width:50px">On Air...</i><i class=r style="left:835px;width:55px">608.52</i><i class=r style="left:890px;width:65px">608.52</i><i style="left:955px;width:75px">National</i><i style="left:1030px;width:25px">yes</i><i style="left:1055px;width:30px">auto</i></div>
<div class="row" style="top:184px"><i class=k0 style="left:0px;width:120px">HYUNDAI SANTA FE ...</i><i class=r style="left:120px;width:25px">5</i><i class=k2 style="left:145px;width:200px">SUV(Standard) - Gold</i><i class=k3 style="left:345px;width:75px">Flexible Car...</i><i style="left:420px;width:35px">Mon</i><i class=k5 style="left:455px;width:70px">27/03/2017</i><i style="left:525px;width:40px">12:00</i><i style="left:565px;width:35px">Mon</i><i class=k5 style="left:600px;width:70px">10/04/2017</i><i style="left:670px;width:40px">12:00</i><i class=r style="left:710px;width:25px">14</i><i style="left:735px;width:50px">On Air...</i><i style="left:785px;width:50px">On Air...</i><i class=r style="left:835px;width:55px">615.76</i><i class=r style="left:890px;width:65px">615.76</i><i style="left:955px;width:75px">Alamo</i><i style="left:1030px;width:25px">yes</i><i style="left:1055px;width:30px">auto</i></div>
<div class="row" style="top:199px"><i class=k0 style="left:0px;width:120px">HYUNDAI SANTA FE ...</i><i class=r style="left:120px;width:25px">5</i><i class=k2 style="left:145px;width:200px">SUV(Standard) - Gold - Plus Excess R...</i><i class=k3 style="left:345px;width:75px">Flexible Car...</i><i style="left:420px;width:35px">Mon</i><i class=k5 style="left:455px;width:70px">27/03/2017</i><i style="left:525px;width:40px">12:00</i><i style="left:565px;width:35px">Mon</i><i class=k5 style="left:600px;width:70px">10/04/2017</i><i style="left:670px;width:40px">12:00</i><i class=r style="left:710px;width:25px">14</i><i style="left:735px;width:50px">On Air...</i><i style="left:785px;width:50px">On Air...</i><i class=r style="left:835px;width:55px">616.08</i><i class=r style="left:890px;width:65px">616.08</i><i style="left:955px;width:75px">National</i><i style="left:1030px;width:25px">yes</i><i style="left:1055px;width:30px">auto</i></div>
<div class="row" style="top:214px"><i class=k0 style="left:0px;width:120px">NISSAN ROGUE OR S...</i><i class=r style="left:120px;width:25px">5</i><i class=k2 style="left:145px;width:200px">SUV(Intermediate) - Gold GPS - Plus E...</i><i class=k3 style="left:345px;width:75px">Flexible Car...</i><i style="left:420px;width:35px">Mon</i><i class=k5 style="left:455px;width:70px">27/03/2017</i><i style="left:525px;width:40px">12:00</i><i style="left:565px;width:35px">Mon</i><i class=k5 style="left:600px;width:70px">10/04/2017</i><i style="left:670px;width:40px">12:00</i><i class=r style="left:710px;width:25px">14</i><i style="left:735px;width:50px">On Air...</i><i style="left:785px;width:50px">On Air...</i><i class=r style="left:835px;width:55px">617.37</i><i class=r style="left:890px;width:65px">617.37</i><i style="left:955px;width:75px">Alamo</i><i style="left:1030px;width:25px">yes</i><i style="left:1055px;width:30px">auto</i></div>
<div class="row" style="top:229px"><i class=k0 style="left:0px;width:120px">NISSAN ROGUE OR S...</i><i class=r style="left:120px;width:25px">5</i><i class=k2 style="left:145px;width:200px">SUV(Intermediate) - Inclusive GPS - Pl...</i><i class=k3 style="left:345px;width:75px">Flexible Car...</i><i style="left:420px;width:35px">Mon</i><i class=k5 style="left:455px;width:70px">27/03/2017</i><i style="left:525px;width:40px">12:00</i><i style="left:565px;width:35px">Mon</i><i class=k5 style="left:600px;width:70px">10/04/2017</i><i style="left:670px;width:40px">12:00</i><i class=r style="left:710px;width:25px">14</i><i style="left:735px;width:50px">On Air...</i><i style="left:785px;width:50px">On Air...</i><i class=r style="left:835px;width:55px">620.96</i><i class=r style="left:890px;width:65px">620.96</i><i style="left:955px;width:75px">Alamo</i><i style="left:1030px;width:25px">yes</i><i style="left:1055px;width:30px">auto</i></div>
<div class="row" style="top:244px"><i class=k0 style="left:0px;width:120px">HYUNDAI SANTA FE ...</i><i class=r style="left:120px;width:25px">5</i><i class=k2 style="left:145px;width:200px">SUV(Standard) - Gold - Plus Excess R...</i><i class=k3 style="left:345px;width:75px">Flexible Car...</i><i style="left:420px;width:35px">Mon</i><i class=k5 style="left:455px;width:70px">27/03/2017</i><i style="left:525px;width:40px">12:00</i><i style="left:565px;width:35px">Mon</i><i class=k5 style="left:600px;width:70px">10/04/2017</i><i style="left:670px;width:40px">12:00</i><i class=r style="left:710px;width:25px">14</i><i style="left:735px;width:50px">On Air...</i><i style="left:785px;width:50px">On Air...</i><i class=r style="left:835px;width:55px">652.16</i><i class=r style="left:890px;width:65px">652.16</i><i style="left:955px;width:75px">Alamo</i><i style="left:1030px;width:25px">yes</i><i style="left:1055px;width:30px">auto</i></div>
<div class="row" style="top:259px"><i class=k0 style="left:0px;width:120px">HYUNDAI SANTA FE ...</i><i class=r style="left:120px;width:25px">5</i><i class=k2 style="left:145px;width:200px">SUV(Standard) - Inclusive GPS</i><i class=k3 style="left:345px;width:75px">Flexible Car...</i><i style="left:420px;width:35px">Mon</i><i class=k5 style="left:455px;width:70px">27/03/2017</i><i style="left:525px;width:40px">12:00</i><i style="left:565px;width:35px">Mon</i><i class=k5 style="left:600px;width:70px">10/04/2017</i><i style="left:670px;width:40px">12:00</i><i class=r style="left:710px;width:25px">14</i><i style="left:735px;width:50px">On Air...</i><i style="left:785px;width:50px">On Air...</i><i class=r style="left:835px;width:55px">660.54</i><i class=r style="left:890px;width:65px">660.54</i><i style="left:955px;width:75px">Alamo</i><i style="left:1030px;width:25px">yes</i><i style="left:1055px;width:30px">auto</i></div>
<div class="row" style="top:274px"><i class=k0 style="left:0px;width:120px">HYUNDAI SANTA FE ...</i><i class=r style="left:120px;width:25px">5</i><i class=k2 style="left:145px;width:200px">SUV(Standard) - Inclusive GPS</i><i class=k3 style="left:345px;width:75px">Flexible Car...</i><i style="left:420px;width:35px">Mon</i><i class=k5 style="left:455px;width:70px">27/03/2017</i><i style="left:525px;width:40px">12:00</i><i style="left:565px;width:35px">Mon</i><i class=k5 style="left:600px;width:70px">10/04/2017</i><i style="left:670px;width:40px">12:00</i><i class=r style="left:710px;width:25px">14</i><i style="left:735px;width:50px">On Air...</i><i style="left:785px;width:50px">On Air...</i><i class=r style="left:835px;width:55px">664.68</i><i class=r style="left:890px;width:65px">664.68</i><i style="left:955px;width:75px">National</i><i style="left:1030px;width:25px">yes</i><i style="left:1055px;width:30px">auto</i></div>
<div class="row" style="top:289px"><i class=k0 style="left:0px;width:120px">HYUNDAI SANTA FE ...</i><i class=r style="left:120px;width:25px">5</i><i class=k2 style="left:145px;width:200px">SUV(Standard) - Gold GPS</i><i class=k3 style="left:345px;width:75px">Flexible Car...</i><i style="left:420px;width:35px">Mon</i><i class=k5 style="left:455px;width:70px">27/03/2017</i><i style="left:525px;width:40px">12:00</i><i style="left:565px;width:35px">Mon</i><i class=k5 style="left:600px;width:70px">10/04/2017</i><i style="left:670px;width:40px">12:00</i><i class=r style="left:710px;width:25px">14</i><i style="left:735px;width:50px">On Air...</i><i style="left:785px;width:50px">On Air...</i><i class=r style="left:835px;width:55px">672.23</i><i class=r style="left:890px;width:65px">672.23</i><i style="left:955px;width:75px">National</i><i style="left:1030px;width:25px">yes</i><i style="left:1055px;width:30px">auto</i></div>
<div class="row" style="top:304px"><i class=k0 style="left:0px;width:120px">CHEVY TAHOE OR SI...</i><i class=r style="left:120px;width:25px">7</i><i class=k2 style="left:145px;width:200px">SUV(Full Size) - Inclusive</i><i class=k3 style="left:345px;width:75px">Flexible Car...</i><i style="left:420px;width:35px">Mon</i><i class=k5 style="left:455px;width:70px">27/03/2017</i><i style="left:525px;width:40px">12:00</i><i style="left:565px;width:35px">Mon</i><i class=k5 style="left:600px;width:70px">10/04/2017</i><i style="left:670px;width:40px">12:00</i><i class=r style="left:710px;width:25px">14</i><i style="left:735px;width:50px">On Air...</i><i style="left:785px;width:50px">On Air...</i><i class=r style="left:835px;width:55px">689.20</i><i class=r style="left:890px;width:65px">689.20</i><i style="left:955px;width:75px">Alamo</i><i style="left:1030px;width:25px">yes</i><i style="left:1055px;width:30px">auto</i></div>
<div class="row" style="top:319px"><i class=k0 style="left:0px;width:120px">HYUNDAI SANTA FE ...</i><i class=r style="left:120px;width:25px">5</i><i class=k2 style="left:145px;width:200px">SUV(Standard) - Inclusive GPS - Plus ...</i><i class=k3 style="left:345px;width:75px">Flexible Car...</i><i style="left:420px;width:35px">Mon</i><i class=k5 style="left:455px;width:70px">27/03/2017</i><i style="left:525px;width:40px">12:00</i><i style="left:565px;width:35px">Mon</i><i class=k5 style="left:600px;width:70px">10/04/2017</i><i style="left:670px;width:40px">12:00</i><i class=r style="left:710px;width:25px">14</i><i style="left:735px;width:50px">On Air...</i><i style="left:785px;width:50px">On Air...</i><i class=r style="left:835px;width:55px">696.94</i><i class=r style="left:890px;width:65px">696.94</i><i style="left:955px;width:75px">Alamo</i><i style="left:1030px;width:25px">yes</i><i style="left:1055px;width:30px">auto</i></div>
<div class="row" style="top:334px"><i class=k0 style="left:0px;width:120px">HYUNDAI SANTA FE ...</i><i class=r style="left:120px;width:25px">5</i><i class=k2 style="left:145px;width:200px">SUV(Standard) - Inclusive GPS - Plus ...</i><i class=k3 style="left:345px;width:75px">Flexible Car...</i><i style="left:420px;width:35px">Mon</i><i class=k5 style="left:455px;width:70px">27/03/2017</i><i style="left:525px;width:40px">12:00</i><i style="left:565px;width:35px">Mon</i><i class=k5 style="left:600px;width:70px">10/04/2017</i><i style="left:670px;width:40px">12:00</i><i class=r style="left:710px;width:25px">14</i><i style="left:735px;width:50px">On Air...</i><i style="left:785px;width:50px">On Air...</i><i class=r style="left:835px;width:55px">701.08</i><i class=r style="left:890px;width:65px">701.08</i><i style="left:955px;width:75px">National</i><i style="left:1030px;width:25px">yes</i><i style="left:1055px;width:30px">auto</i></div>
<div class="row" style="top:349px"><i class=k0 style="left:0px;width:120px">HYUNDAI SANTA FE ...</i><i class=r style="left:120px;width:25px">5</i><i class=k2 style="left:145px;width:200px">SUV(Standard) - Gold GPS</i><i class=k3 style="left:345px;width:75px">Flexible Car...</i><i style="left:420px;width:35px">Mon</i><i class=k5 style="left:455px;width:70px">27/03/2017</i><i style="left:525px;width:40px">12:00</i><i style="left:565px;width:35px">Mon</i><i class=k5 style="left:600px;width:70px">10/04/2017</i><i style="left:670px;width:40px">12:00</i><i class=r style="left:710px;width:25px">14</i><i style="left:735px;width:50px">On Air...</i><i style="left:785px;width:50px">On Air...</i><i class=r style="left:835px;width:55px">707.11</i><i class=r style="left:890px;width:65px">707.11</i><i style="left:955px;width:75px">Alamo</i><i style="left:1030px;width:25px">yes</i><i style="left:1055px;width:30px">auto</i></div>
<div class="row" style="top:364px"><i class=k0 style="left:0px;width:120px">HYUNDAI SANTA FE ...</i><i class=r style="left:120px;width:25px">5</i><i class=k2 style="left:145px;width:200px">SUV(Standard) - Gold GPS - Plus Exce...</i><i class=k3 style="left:345px;width:75px">Flexible Car...</i><i style="left:420px;width:35px">Mon</i><i class=k5 style="left:455px;width:70px">27/03/2017</i><i style="left:525px;width:40px">12:00</i><i style="left:565px;width:35px">Mon</i><i class=k5 style="left:600px;width:70px">10/04/2017</i><i style="left:670px;width:40px">12:00</i><i class=r style="left:710px;width:25px">14</i><i style="left:735px;width:50px">On Air...</i><i style="left:785px;width:50px">On Air...</i><i class=r style="left:835px;width:55px">708.63</i><i class=r style="left:890px;width:65px">708.63</i><i style="left:955px;width:75px">National</i><i style="left:1030px;width:25px">yes</i><i style="left:1055px;width:30px">auto</i></div>
<div class="row" style="top:379px"><i class=k0 style="left:0px;width:120px">NISSAN ROGUE OR S...</i><i class=r style="left:120px;width:25px">5</i><i class=k2 style="left:145px;width:200px">SUV(Intermediate) - Platinum - Plus Exc...</i><i class=k3 style="left:345px;width:75px">Flexible Car...</i><i style="left:420px;width:35px">Mon</i><i class=k5 style="left:455px;width:70px">27/03/2017</i><i style="left:525px;width:40px">12:00</i><i style="left:565px;width:35px">Mon</i><i class=k5 style="left:600px;width:70px">10/04/2017</i><i style="left:670px;width:40px">12:00</i><i class=r style="left:710px;width:25px">14</i><i style="left:735px;width:50px">On Air...</i><i style="left:785px;width:50px">On Air...</i><i class=r style="left:835px;width:55px">720.95</i><i class=r style="left:890px;width:65px">720.95</i><i style="left:955px;width:75px">Alamo</i><i style="left:1030px;width:25px">yes</i><i style="left:1055px;width:30px">auto</i></div>
</div>
<div class="abs" style="left:1573px;top:372px;width:16px;height:384px;background:repeating-conic-gradient(#fff 0 25%, #d4d0c8 0 50%) 0 0/2px 2px;"></div>
<div class="btn" style="left:1573px;top:372px;width:16px;height:16px"></div>
<svg class="abs" style="left:1577px;top:378px" width="7" height="4" viewBox="0 0 7 4"><path d="M0 4 H7 L3.5 0Z" fill="#000"/></svg>
<div class="btn" style="left:1573px;top:388px;width:16px;height:154px"></div>
<div class="btn" style="left:1573px;top:740px;width:16px;height:16px"></div>
<svg class="abs" style="left:1577px;top:746px" width="7" height="4" viewBox="0 0 7 4"><path d="M0 0 H7 L3.5 4Z" fill="#000"/></svg>
<div class="a " style="left:218px;top:783px;letter-spacing:0.08px">First portion: 10.5 sec, total search time: 17.3 sec</div>
<div class="btn" style="left:1560px;top:778px;width:23px;height:23px"></div>
<div class="abs" style="left:1568px;top:780px;font:bold 17px 'Liberation Serif',serif;color:#0a50a0;line-height:17px">i</div>
<div class="abs" style="left:211px;top:805px;width:1382px;height:1px;background:#808080;"></div>
<div class="a " style="left:214.5px;top:808px;letter-spacing:-0.2px">Summary</div>
<div class="abs" style="left:263px;top:806px;width:1px;height:17px;background:#808080;"></div>
<div class="a " style="left:266.5px;top:808px;">Search</div>
<div class="abs" style="left:305px;top:805px;width:50px;height:17px;background:#10860f;border-radius:0 0 3px 3px"></div>
<div class="a " style="left:307.5px;top:808px;color:#fff">Car MCO</div>
<div class="a " style="left:358.5px;top:808px;letter-spacing:-0.15px">Financial Summary</div>
<div class="abs" style="left:450px;top:806px;width:1px;height:17px;background:#808080;"></div>
<div class="a " style="left:806px;top:832px;">User: 446 - Clark Silk</div>
<div class="a " style="left:916px;top:832px;">Retailer: 'Ocean-Florida'</div>
<div class="a " style="left:1042.5px;top:832px;">Client: none</div>
<div class="a " style="left:1540.5px;top:832px;">13:55 GMT</div>
<div class="abs" style="left:0px;top:857px;width:1600px;height:1px;background:#fff;"></div>
</div>
</body></html>
